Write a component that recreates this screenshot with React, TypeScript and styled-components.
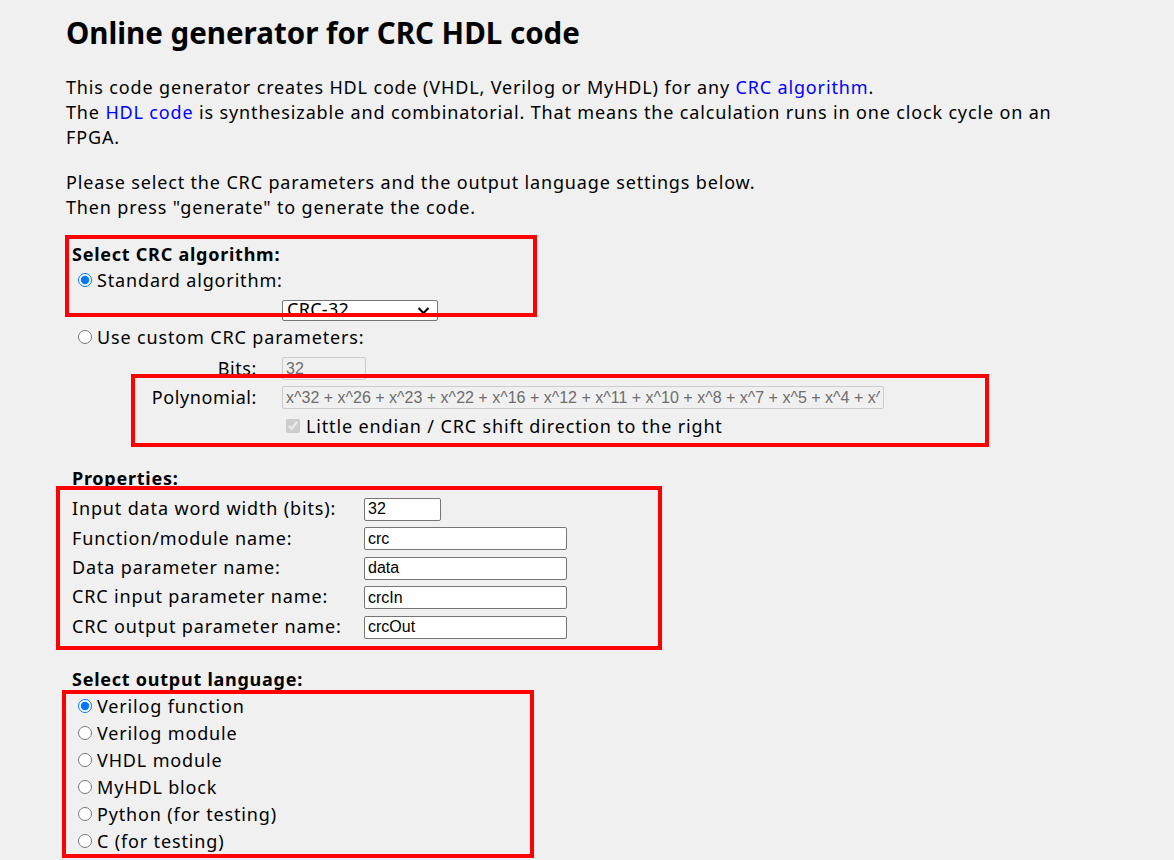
import React from "react";
import styled, { createGlobalStyle } from "styled-components";

const GlobalStyle = createGlobalStyle`
  html, body {
    margin: 0;
    padding: 0;
    background: #f0f0f0;
  }
  body {
    font-family: "Noto Sans", "Open Sans", sans-serif;
    font-size: 18px;
    letter-spacing: 0.85px;
    color: #000;
  }
`;

const Page = styled.div`
  position: relative;
  width: 1174px;
  height: 860px;
  overflow: hidden;
  padding-left: 66px;
  box-sizing: border-box;
`;

const Title = styled.h1`
  margin: 13px 0 0 0;
  font-size: 29.5px;
  line-height: 40px;
  font-weight: 700;
  letter-spacing: 0;
`;

const Para = styled.p<{ $top: number }>`
  margin: ${(p) => p.$top}px 0 0 0;
  line-height: 25px;
  max-width: 995px;
`;

const Link = styled.a`
  color: #0000ff;
  text-decoration: none;
`;

const Form = styled.div`
  padding-left: 6px;
`;

const Heading = styled.div<{ $top: number }>`
  margin-top: ${(p) => p.$top}px;
  height: 26px;
  line-height: 26px;
  font-weight: 700;
  letter-spacing: 0.75px;
`;

const RadioRow = styled.label<{ $h?: number }>`
  display: flex;
  align-items: center;
  height: ${(p) => p.$h ?? 26}px;
  line-height: 26px;
  white-space: nowrap;
`;

const Radio = styled.input.attrs({ type: "radio" })`
  width: 14px;
  height: 14px;
  margin: 0 5px 0 6px;
  accent-color: #0075ff;
`;

const SelectRow = styled.div`
  height: 31px;
  padding-left: 210px;
  box-sizing: border-box;
  padding-top: 7px;
`;

const FakeSelect = styled.div`
  position: relative;
  width: 156px;
  height: 21px;
  box-sizing: border-box;
  border: 1px solid #767676;
  border-radius: 2px;
  background: #fff;
  overflow: hidden;
`;

const SelectText = styled.span`
  display: block;
  margin: -4.5px 0 0 4px;
  line-height: 25px;
  font-size: 18px;
  letter-spacing: 0.3px;
`;

const Chevron = styled.svg`
  position: absolute;
  right: 7px;
  top: 5px;
`;

const ParamGrid = styled.div`
  margin-top: 3px;
  display: grid;
  grid-template-columns: 185px 1fr;
  column-gap: 25px;
  grid-auto-rows: 29px;
  align-items: center;
`;

const ParamLabel = styled.div`
  text-align: right;
  line-height: 26px;
  letter-spacing: 0.6px;
`;

const TextInput = styled.input<{ $w: number }>`
  width: ${(p) => p.$w}px;
  height: 23px;
  box-sizing: border-box;
  border: 1px solid #767676;
  border-radius: 2px;
  background: #fff;
  font-family: "Liberation Sans", Arial, sans-serif;
  font-size: 16px;
  letter-spacing: 0;
  padding: 0 3px;
  margin: 0;
  color: #000;
  &:disabled {
    border-color: #cdcdcd;
    background: #f0f0f0;
    color: #6d6d6d;
  }
`;

const CheckLabel = styled.label`
  display: flex;
  align-items: center;
  white-space: nowrap;
  line-height: 26px;
`;

const Check = styled.input.attrs({ type: "checkbox" })`
  width: 14px;
  height: 14px;
  margin: 0 6px 0 4px;
`;

const PropGrid = styled.div`
  margin-top: 2.5px;
  display: grid;
  grid-template-columns: 292px 1fr;
  grid-auto-rows: 29.4px;
  align-items: center;
`;

const PropLabel = styled.div`
  line-height: 26px;
  white-space: nowrap;
`;

const LangList = styled.div`
  display: flex;
  flex-direction: column;
`;

const Mark = styled.div<{ $x: number; $y: number; $w: number; $h: number }>`
  position: absolute;
  left: ${(p) => p.$x}px;
  top: ${(p) => p.$y}px;
  width: ${(p) => p.$w}px;
  height: ${(p) => p.$h}px;
  box-sizing: border-box;
  border: 4px solid #ff0000;
  pointer-events: none;
`;

const props = [
  { label: "Input data word width (bits):", value: "32", w: 77 },
  { label: "Function/module name:", value: "crc", w: 203 },
  { label: "Data parameter name:", value: "data", w: 203 },
  { label: "CRC input parameter name:", value: "crcIn", w: 203 },
  { label: "CRC output parameter name:", value: "crcOut", w: 203 },
];

const langs = [
  "Verilog function",
  "Verilog module",
  "VHDL module",
  "MyHDL block",
  "Python (for testing)",
  "C (for testing)",
];

export default function App() {
  return (
    <Page>
      <GlobalStyle />
      <Title>Online generator for CRC HDL code</Title>
      <Para $top={22}>
        This code generator creates HDL code (VHDL, Verilog or MyHDL) for any{" "}
        <Link href="#">CRC algorithm</Link>.
        <br />
        The <Link href="#">HDL code</Link> is synthesizable and combinatorial.
        That means the calculation runs in one clock cycle on an FPGA.
      </Para>
      <Para $top={20}>
        Please select the CRC parameters and the output language settings below.
        <br />
        Then press "generate" to generate the code.
      </Para>

      <Form>
        <Heading $top={21}>Select CRC algorithm:</Heading>
        <RadioRow>
          <Radio name="alg" defaultChecked />
          Standard algorithm:
        </RadioRow>
        <SelectRow>
          <FakeSelect role="combobox">
            <SelectText>CRC-32</SelectText>
            <Chevron width="13" height="9" viewBox="0 0 13 9">
              <polyline
                points="1.5,2 6.5,7 11.5,2"
                fill="none"
                stroke="#000"
                strokeWidth="2"
              />
            </Chevron>
          </FakeSelect>
        </SelectRow>
        <RadioRow>
          <Radio name="alg" />
          Use custom CRC parameters:
        </RadioRow>
        <ParamGrid>
          <ParamLabel>Bits:</ParamLabel>
          <div>
            <TextInput $w={84} defaultValue="32" disabled />
          </div>
          <ParamLabel>Polynomial:</ParamLabel>
          <div>
            <TextInput
              $w={602}
              defaultValue="x^32 + x^26 + x^23 + x^22 + x^16 + x^12 + x^11 + x^10 + x^8 + x^7 + x^5 + x^4 + x^2 + x + 1"
              disabled
            />
          </div>
          <div />
          <CheckLabel>
            <Check defaultChecked disabled />
            Little endian / CRC shift direction to the right
          </CheckLabel>
        </ParamGrid>

        <Heading $top={25}>Properties:</Heading>
        <PropGrid>
          {props.map((p) => (
            <React.Fragment key={p.label}>
              <PropLabel>{p.label}</PropLabel>
              <div>
                <TextInput $w={p.w} defaultValue={p.value} />
              </div>
            </React.Fragment>
          ))}
        </PropGrid>

        <Heading $top={25.5}>Select output language:</Heading>
        <LangList>
          {langs.map((l, i) => (
            <RadioRow key={l} $h={27.2}>
              <Radio name="lang" defaultChecked={i === 0} />
              {l}
            </RadioRow>
          ))}
        </LangList>
      </Form>

      <Mark $x={65} $y={235} $w={472} $h={82} />
      <Mark $x={131} $y={374} $w={858} $h={73} />
      <Mark $x={56} $y={486} $w={606} $h={164} />
      <Mark $x={62} $y={690} $w={472} $h={168} />
    </Page>
  );
}
